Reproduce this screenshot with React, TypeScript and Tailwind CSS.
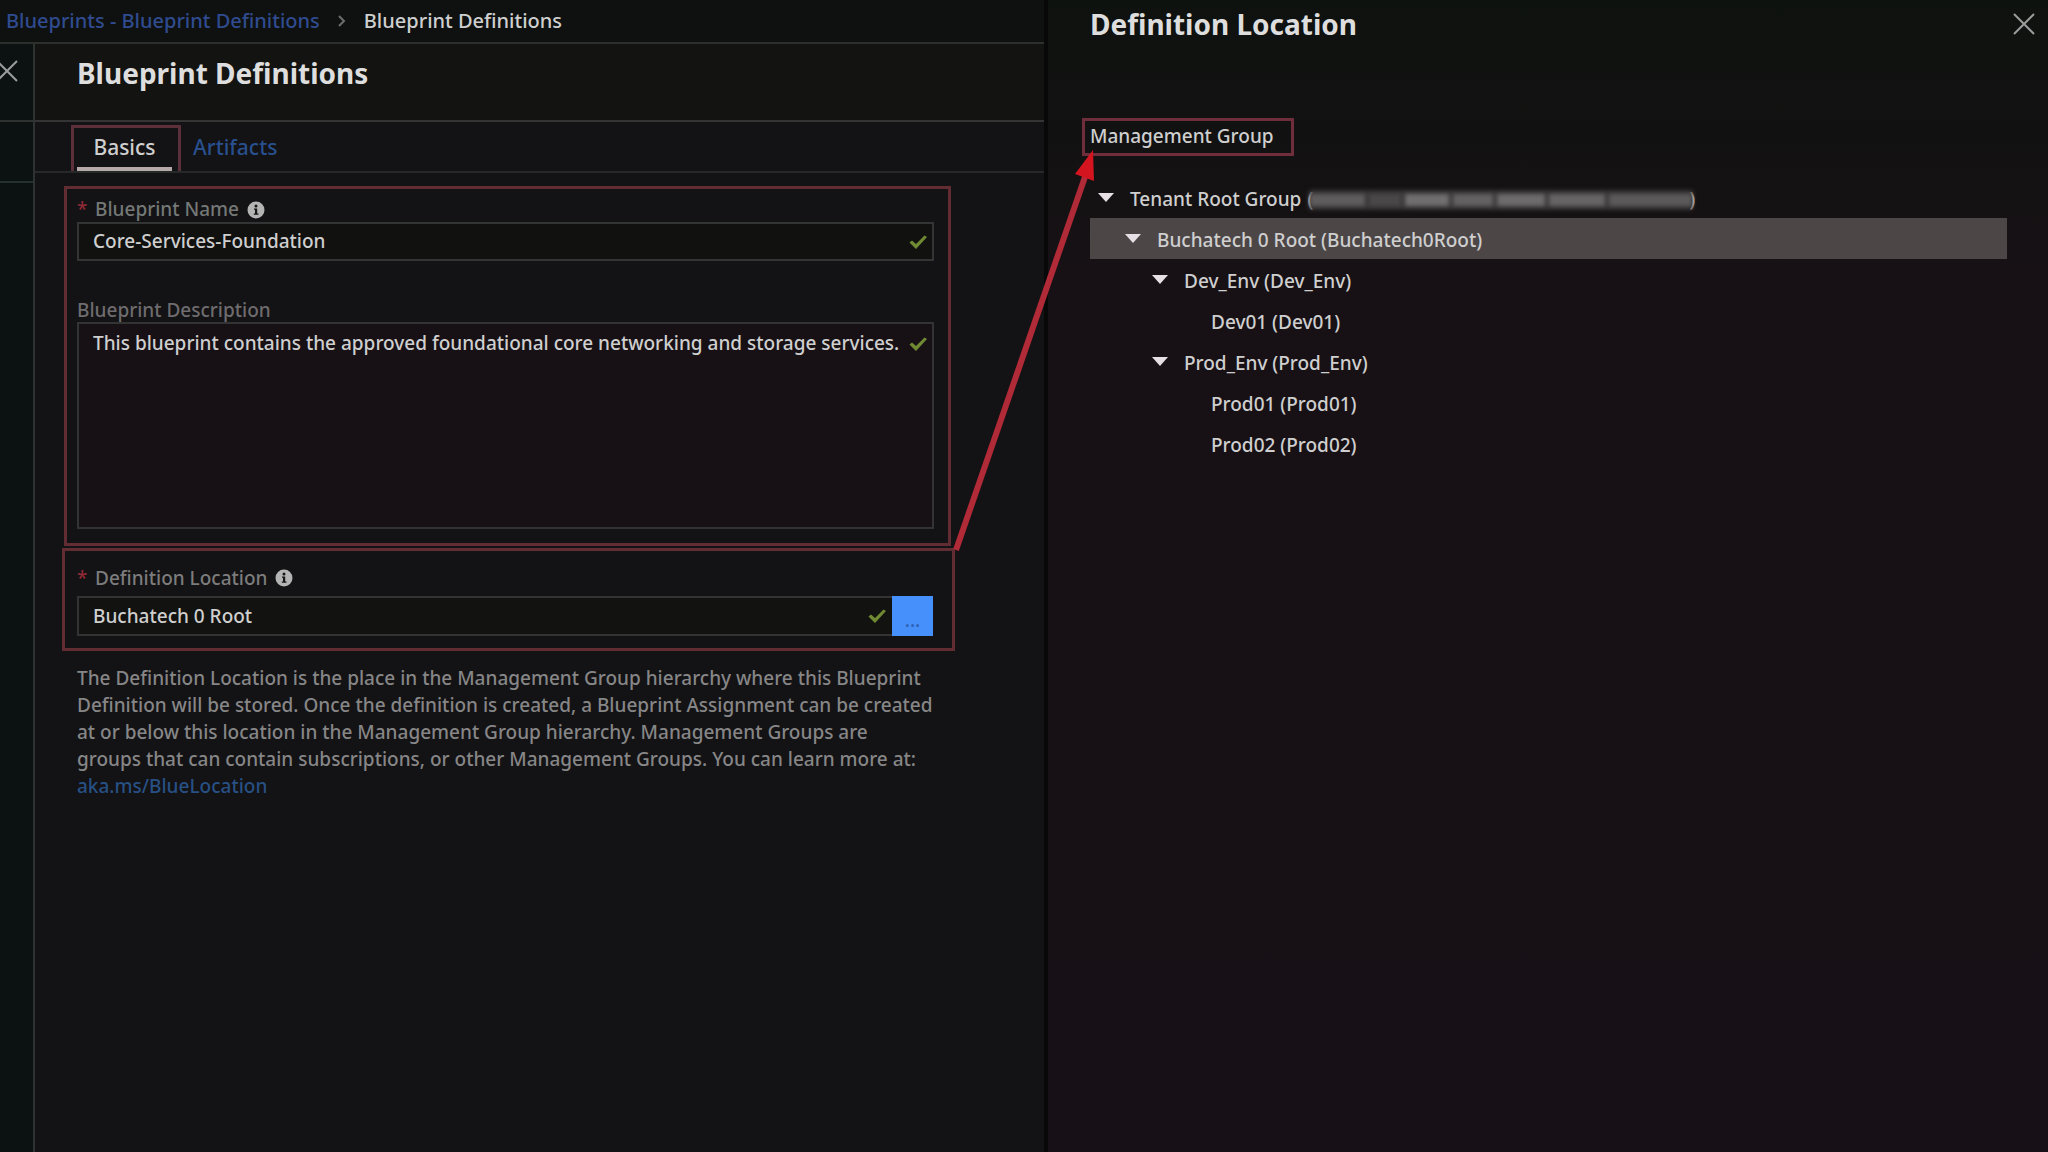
import { useState } from "react";

type TreeNode = { name: string; depth: number; leaf?: boolean; redacted?: boolean };

const groups: TreeNode[] = [
  { name: "Tenant Root Group", depth: 0, redacted: true },
  { name: "Buchatech 0 Root (Buchatech0Root)", depth: 1 },
  { name: "Dev_Env (Dev_Env)", depth: 2 },
  { name: "Dev01 (Dev01)", depth: 3, leaf: true },
  { name: "Prod_Env (Prod_Env)", depth: 2 },
  { name: "Prod01 (Prod01)", depth: 3, leaf: true },
  { name: "Prod02 (Prod02)", depth: 3, leaf: true },
];

const indents = ["pl-2", "pl-[35px]", "pl-[62px]", "pl-[89px]"];

function InfoIcon() {
  return (
    <svg viewBox="0 0 18 18" className="size-[18px] shrink-0" aria-hidden="true">
      <circle cx="9" cy="9" r="8.5" fill="#b4b4b4" />
      <circle cx="9" cy="5" r="1.5" fill="#161616" />
      <path d="M7 7.5h3.2v5H11.5v1.3H6.8v-1.3h1.2V8.8H7z" fill="#161616" />
    </svg>
  );
}

function CheckIcon() {
  return (
    <svg viewBox="0 0 20 16" className="h-4 w-5 shrink-0" aria-hidden="true">
      <path d="M1.5 8.5 4 6.5 8 10 16.5 1.5 19 3 8 15z" fill="#6f8a32" />
    </svg>
  );
}

function CloseIcon() {
  return (
    <svg viewBox="0 0 22 22" className="size-[22px]" aria-hidden="true">
      <path d="M1 1 21 21M21 1 1 21" stroke="#9a9d9b" strokeWidth="2" fill="none" />
    </svg>
  );
}

function Required() {
  return <span className="w-[18px] text-[#8e2936]">*</span>;
}

export default function App() {
  const [selected, setSelected] = useState(1);
  const [name, setName] = useState("Core-Services-Foundation");
  const [description, setDescription] = useState(
    "This blueprint contains the approved foundational core networking and storage services."
  );

  return (
    <div className="grid min-h-screen grid-cols-[1044fr_1004fr] overflow-hidden bg-[#131214] font-['Noto_Sans','Open_Sans',sans-serif] text-[19px] font-medium text-[#cfcfcf]">
      {/* left side: breadcrumb + blade */}
      <div className="flex min-w-0 flex-col bg-[#131214]">
        <nav className="flex h-11 items-center border-b-2 border-[#2c302d] bg-[#0e110f] pl-[6px] text-[20px]">
          <a href="#" className="text-[#304b90]">Blueprints - Blueprint Definitions</a>
          <svg viewBox="0 0 8 12" className="mx-[18px] h-3 w-2" aria-hidden="true">
            <path d="M1 1 6 6 1 11" stroke="#6b6e6c" strokeWidth="2" fill="none" />
          </svg>
          <span>Blueprint Definitions</span>
        </nav>

        <div className="flex flex-1">
          {/* sliver of the previous blade */}
          <div className="flex w-[35px] shrink-0 flex-col border-r-2 border-[#2e3332] bg-[#0c1211]">
            <div className="h-[78px] overflow-hidden border-b-2 border-[#2e3332] pt-4">
              <button type="button" aria-label="Close previous blade" className="-ml-1 block">
                <CloseIcon />
              </button>
            </div>
            <div className="h-[61px] border-b-2 border-[#26302f]" />
          </div>

          <main className="min-w-0 flex-1">
            <header className="h-[78px] border-b-2 border-[#343435] bg-[#131312] pt-[9px] pl-[42px]">
              <h1 className="text-[28px] leading-[40px] font-bold text-[#dedede]">Blueprint Definitions</h1>
            </header>

            <div role="tablist" className="flex h-[51px] items-end border-b-2 border-[#262927] pl-9">
              <div className="border-3 border-b-0 border-[#5c303a] pr-[6px] pl-[3px]">
                <button
                  type="button"
                  role="tab"
                  aria-selected="true"
                  className="h-[43px] w-[95px] border-b-4 border-[#b5a9a9] text-[21px]"
                >
                  Basics
                </button>
              </div>
              <button type="button" role="tab" aria-selected="false" className="h-[43px] border-b-4 border-transparent px-3 text-[21px] text-[#28508e]">
                Artifacts
              </button>
            </div>

            <form className="mt-[13px] mr-[89px] ml-[27px]" onSubmit={(e) => e.preventDefault()}>
              <div className="mr-1 ml-[2px] border-3 border-[#622c33] pt-2 pr-[14px] pb-[14px] pl-[10px]">
                <div className="flex h-[25px] items-center text-[#747876]">
                  <Required />
                  <label htmlFor="bp-name" className="mr-2">Blueprint Name</label>
                  <InfoIcon />
                </div>
                <div className="flex h-[39px] items-center border-2 border-[#333534] bg-[#11110f] pr-1 pl-[14px]">
                  <input
                    id="bp-name"
                    value={name}
                    onChange={(e) => setName(e.target.value)}
                    className="min-w-0 flex-1 bg-transparent outline-none"
                  />
                  <CheckIcon />
                </div>

                <label htmlFor="bp-desc" className="mt-[37px] block h-6 leading-[25px] text-[#6e6c6e]">
                  Blueprint Description
                </label>
                <div className="flex h-[207px] border-2 border-[#313433] bg-[#171115] pt-1 pr-1 pl-[14px]">
                  <textarea
                    id="bp-desc"
                    value={description}
                    onChange={(e) => setDescription(e.target.value)}
                    className="min-w-0 flex-1 resize-none overflow-hidden bg-transparent leading-[30px] outline-none"
                  />
                  <span className="pt-2"><CheckIcon /></span>
                </div>
              </div>

              <div className="mt-[2px] border-3 border-[#622c33] pt-3 pr-[19px] pb-3 pl-3">
                <div className="mb-[3px] flex h-[30px] items-center text-[#7c7c7c]">
                  <Required />
                  <label htmlFor="bp-location" className="mr-2">Definition Location</label>
                  <InfoIcon />
                </div>
                <div className="flex h-10">
                  <div className="flex min-w-0 flex-1 items-center border-2 border-r-0 border-[#333333] bg-[#121210] pr-[5px] pl-[14px]">
                    <input id="bp-location" readOnly value="Buchatech 0 Root" className="min-w-0 flex-1 bg-transparent outline-none" />
                    <CheckIcon />
                  </div>
                  <button
                    type="button"
                    aria-label="Pick a definition location"
                    className="flex w-[41px] items-end justify-center bg-[#4690fc] pb-[2px] text-[#2d62b4]"
                  >
                    ...
                  </button>
                </div>
              </div>

              <p className="mt-[14px] mr-5 ml-[15px] leading-[27px] text-[#868687]">
                The Definition Location is the place in the Management Group hierarchy where this Blueprint Definition will be
                stored. Once the definition is created, a Blueprint Assignment can be created at or below this location in the
                Management Group hierarchy. Management Groups are groups that can contain subscriptions, or other Management
                Groups. You can learn more at:
                <br />
                <a href="#" className="text-[#275084]">aka.ms/BlueLocation</a>
              </p>
            </form>
          </main>
        </div>
      </div>

      {/* right side: management group picker */}
      <aside className="relative flex flex-col border-l-4 border-[#090809] bg-linear-to-b from-[#0e120f] via-[#171115] via-25% to-[#171016] pr-[41px] pl-[42px]">
        <div className="-mr-7 flex h-12 items-center justify-between">
          <h2 className="text-[28px] font-bold text-[#dedede]">Definition Location</h2>
          <button type="button" aria-label="Close">
            <CloseIcon />
          </button>
        </div>

        <h3 className="mt-[70px] -ml-2 h-[38px] w-[212px] border-3 border-[#702d3b] pl-[5px] leading-[30px]">Management Group</h3>

        <ul role="tree" className="mt-[21px]">
          {groups.map((node, i) => (
            <li key={node.name} role="treeitem" aria-selected={selected === i}>
              <button
                type="button"
                onClick={() => setSelected(i)}
                className={`flex h-[41px] w-full items-center pt-1 text-left ${indents[node.depth]} ${
                  selected === i ? "bg-[#4c4647]" : ""
                }`}
              >
                <svg viewBox="0 0 16 9" className="mr-4 mb-1 h-[9px] w-4 shrink-0" aria-hidden="true">
                  {!node.leaf && <path d="M0 0h16L8 9z" fill="#e6e0e4" />}
                </svg>
                <span>{node.name}</span>
                {/* tenant id is masked */}
                {node.redacted && (
                  <span className="ml-[6px] flex h-[22px] items-center">
                    (
                    <span className="-ml-1 flex h-5 w-[384px] gap-1 bg-[#383536] py-1 blur-[2px]">
                      <span className="w-14 bg-[#5f5c5d]" />
                      <span className="w-8 bg-[#4a4748]" />
                      <span className="w-11 bg-[#716e6f]" />
                      <span className="w-10 bg-[#646162]" />
                      <span className="w-12 bg-[#6e6b6c]" />
                      <span className="w-14 bg-[#676465]" />
                      <span className="flex-1 bg-[#5c595a]" />
                    </span>
                    <span className="-ml-1">)</span>
                  </span>
                )}
              </button>
            </li>
          ))}
        </ul>

        {/* callout arrow from the location field to the picker */}
        <svg viewBox="0 0 150 406" className="pointer-events-none absolute top-[148px] -left-[98px] h-[406px] w-[150px]" aria-hidden="true">
          <path d="M6 402 136 26" stroke="#b02a37" strokeWidth="6" fill="none" />
          <path d="M143 2 144 33 125 26z" fill="#d4151f" />
        </svg>
      </aside>
    </div>
  );
}
